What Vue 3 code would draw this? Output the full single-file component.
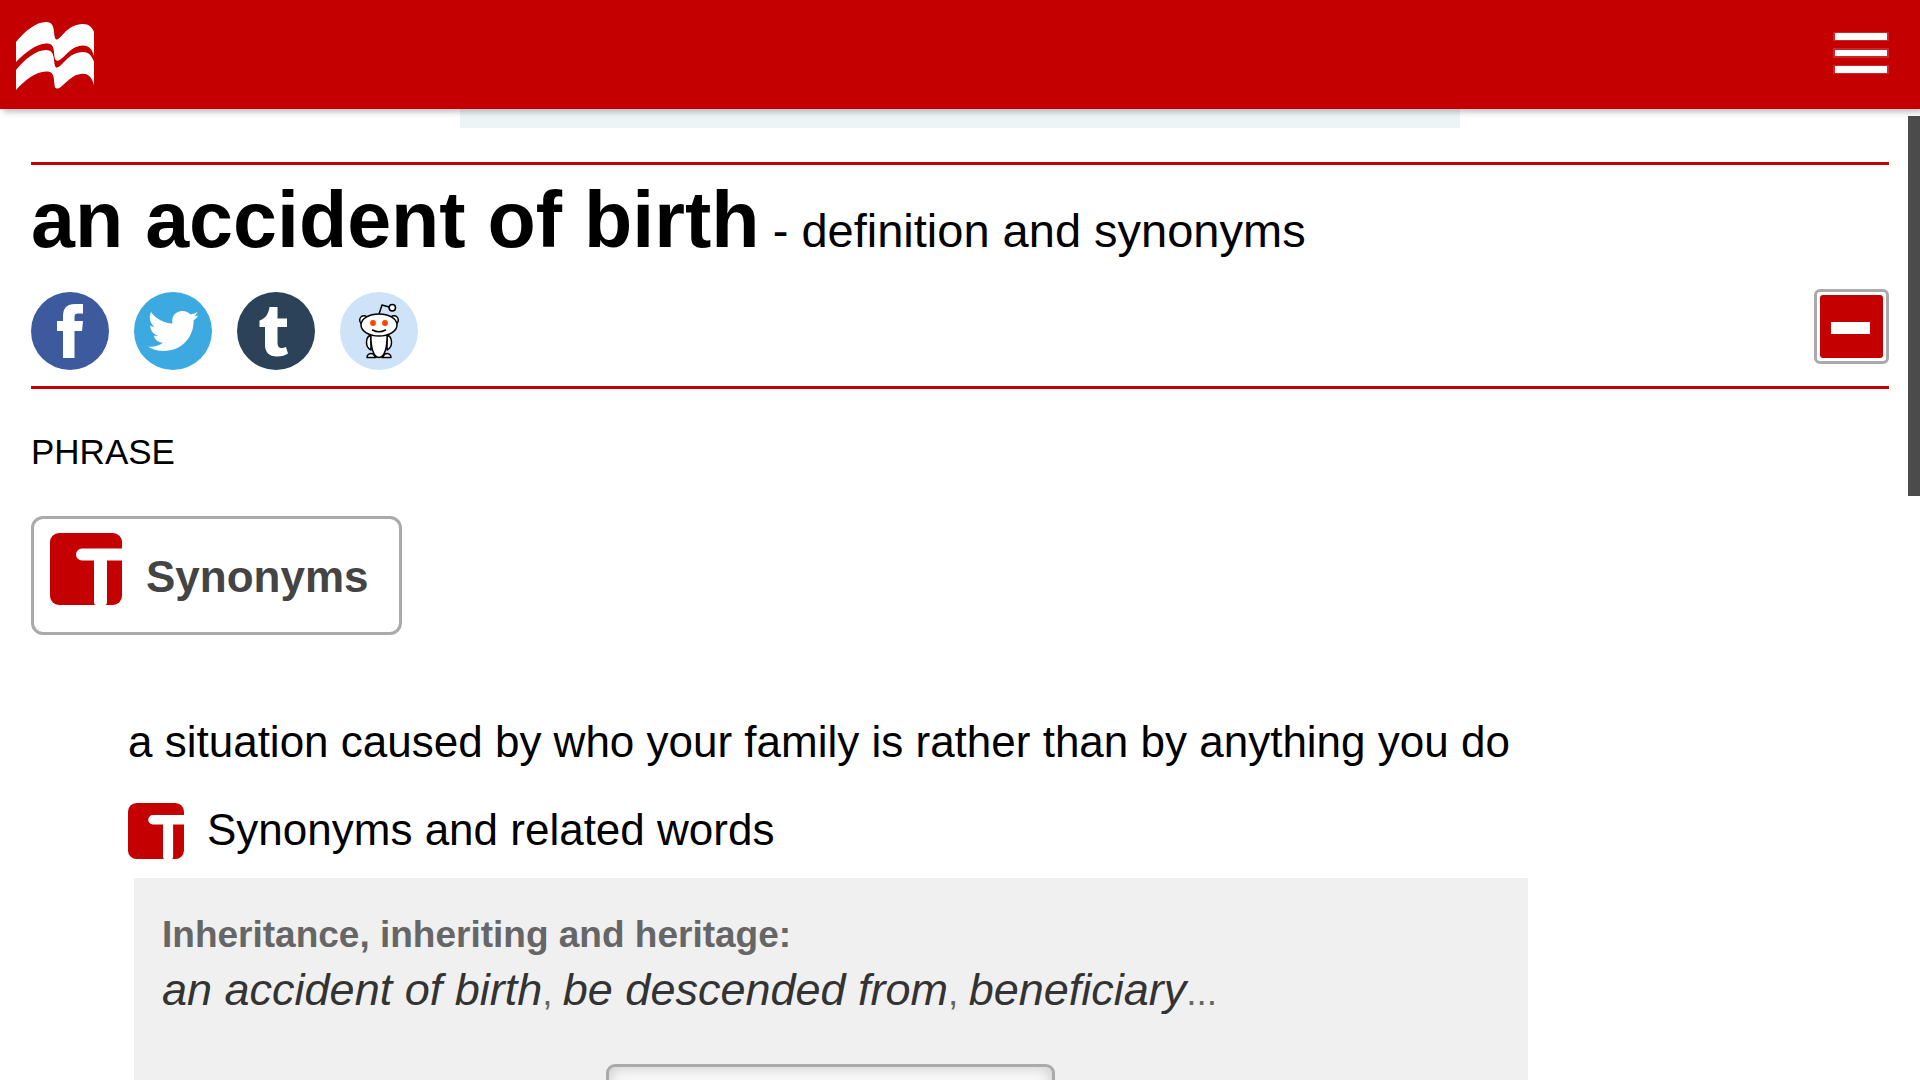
<script setup>
import { ref } from 'vue'

const open = ref(true)
const related = ['an accident of birth', 'be descended from', 'beneficiary']
</script>

<template>
  <div class="page">
    <header class="topbar">
      <a href="#" class="logo" aria-label="Macmillan Dictionary home">
        <svg viewBox="0 0 78 68" width="78" height="68" fill="#fff">
          <path d="M0 20C9 9 20 0 30 0C36 0 37.500 4 38 10C38.500 15 39 17.500 41 17.500C45 17.500 51 2 67 2C73 2 76 5 78 10V34C76 27 73 23.500 67 23.500C54 23.500 47 38.700 41.500 38.700C38.500 38.700 38.500 35 38 30C37.500 24 36 21.500 30 21.500C20 21.500 9 31 0 40Z" />
          <path d="M0 48C9 37 20 28 30 28C36 28 37.500 32 38 38C38.500 43 39 45.500 41 45.500C46 45.500 52 30 67 30C73 30 76 34 78 40V63C76 56 73 51.700 67 51.700C54 51.700 47 66.500 41 66.500C38.500 66.500 38.500 63 38 58C37.500 52 36 49.500 30 49.500C20 49.500 9 58 0 68Z" />
        </svg>
      </a>
      <button type="button" class="menu" aria-label="Menu">
        <svg viewBox="0 0 56 42" width="56" height="42" fill="#fff">
          <g opacity=".15">
            <path d="M0 0H56V9H0zM0 16H56V26H0zM0 33H56V42H0z" />
          </g>
          <path d="M2 1H54V8H2zM2 18H54V24H2zM2 34H54V41H2z" />
        </svg>
      </button>
    </header>

    <main class="content">
      <div class="banner"></div>

      <section class="entry-head">
        <h1 class="title">an accident of birth<span class="subtitle"> - definition and synonyms</span></h1>
        <div class="tools">
          <nav class="share" aria-label="Share">
            <a href="#" aria-label="Facebook">
              <svg viewBox="0 0 78 78" width="78" height="78">
                <circle cx="39" cy="39" r="39" fill="#3e5a9f" />
                <path fill="#fff" d="M32 66V39H26V29H32V24C32 16 36 12 44 12H52V21.500H47C44.500 21.500 43.500 22.500 43.500 25V29H52L51 39H43.500V66Z" />
              </svg>
            </a>
            <a href="#" aria-label="Twitter">
              <svg viewBox="0 0 78 78" width="78" height="78">
                <circle cx="39" cy="39" r="39" fill="#3ca9e1" />
                <path fill="#fff" d="M17 20C22 27 30 31 38.500 31.500C37 24 42 19 48.500 19C52 19 54.500 20.500 56.500 22.500C59 22 61.500 21 63.500 19.700C63 21.500 61.500 23.500 59.800 24.500C61.500 24.300 63 23.800 64.500 23.200C63.300 25 61.500 27 59.600 28.300C60 46 47 59 29.500 59C24 59 18.500 57.500 14 54.700C19.500 55.300 25 53.800 29 50.700C24.500 50.500 21 47.700 19.800 43.700C21.300 44 22.800 43.900 24.200 43.500C19.500 42.500 16.200 38.400 16.200 33.500C17.500 34.300 19 34.800 20.600 34.800C16 31.500 14.500 25.500 17 20Z" />
              </svg>
            </a>
            <a href="#" aria-label="Tumblr">
              <svg viewBox="0 0 78 78" width="78" height="78">
                <circle cx="39" cy="39" r="39" fill="#2c4259" />
                <path fill="#fff" d="M32.500 15H40.500V26.500H50V35H40.500V50C40.500 54.500 42 56 44.500 56C46 56 47.500 55.700 49 55L51 61.500C48 63.500 45 64.500 40 64.500C32 64.500 28 60 28 53V35H22.500V28.500C28.500 26.500 31.500 22 32.500 15Z" />
              </svg>
            </a>
            <a href="#" aria-label="Reddit">
              <svg viewBox="0 0 78 78" width="78" height="78">
                <circle cx="39" cy="39" r="39" fill="#cee3f8" />
                <g fill="#fff" stroke="#000" stroke-width="1.500" stroke-linejoin="round">
                  <path d="M39 22L42 13L49 15" fill="none" />
                  <circle cx="52.300" cy="15.700" r="3.200" />
                  <circle cx="24" cy="28" r="4.300" />
                  <circle cx="54" cy="28" r="4.300" />
                  <path d="M31 43C25 45 25 55 31 58ZM47 43C53 45 53 55 47 58Z" />
                  <path d="M27 65.500C27 62 30 61 33 62L36 65.500ZM51 65.500C51 62 48 61 45 62L42 65.500Z" />
                  <path d="M31 42C30.500 54 33 65.500 39 65.500C45 65.500 47.500 54 47 42Z" />
                  <ellipse cx="39" cy="33" rx="18" ry="11" />
                  <path d="M32.500 38Q39 41.500 45.500 38" fill="none" stroke-linecap="round" />
                </g>
                <circle cx="33" cy="31" r="2.900" fill="#ff4500" />
                <circle cx="45" cy="31" r="2.900" fill="#ff4500" />
              </svg>
            </a>
          </nav>
          <button type="button" class="toggle" aria-label="Collapse entry" @click="open = !open">
            <svg viewBox="0 0 63 63" width="63" height="63">
              <rect width="63" height="63" rx="3" fill="#c50000" />
              <path fill="#fff" d="M11 27H50V39H11z" />
            </svg>
          </button>
        </div>
      </section>

      <p class="word-class">PHRASE</p>

      <button type="button" class="synonyms">
        <svg class="t-icon" viewBox="0 0 72 72" width="72" height="72">
          <rect width="72" height="72" rx="9" fill="#c50000" />
          <path fill="#fff" d="M72 15.500H32A6 6 0 0 0 32 27.500H44V69Q44 72 46 72H55Q57 72 57 69V27.500H72Z" />
        </svg>
        <span>Synonyms</span>
      </button>

      <section v-show="open" class="sense">
        <p class="definition">a situation caused by who your family is rather than by anything you do</p>
        <a href="#" class="related-link">
          <svg class="t-icon" viewBox="0 0 72 72" width="56" height="56">
            <rect width="72" height="72" rx="11" fill="#c50000" />
            <path fill="#fff" d="M72 15.500H32A6 6 0 0 0 32 27.500H45V69Q45 72 47 72H56Q58 72 58 69V27.500H72Z" />
          </svg>
          <span>Synonyms and related words</span>
        </a>
      </section>

      <aside v-show="open" class="thesaurus">
        <h2 class="topic">Inheritance, inheriting and heritage:</h2>
        <p class="words">
          <template v-for="(word, i) in related" :key="word"><a href="#">{{ word }}</a>{{ i < related.length - 1 ? ', ' : '...' }}</template>
        </p>
        <button type="button" class="explore" aria-label="Explore Thesaurus"></button>
      </aside>
    </main>

    <div class="scroll-thumb"></div>
  </div>
</template>

<style>
body {
  margin: 0;
  background: #fff;
}
</style>

<style scoped>
.page {
  position: relative;
  height: 100vh;
  overflow: hidden;
  font-family: "Liberation Sans", Arial, sans-serif;
  font-size: 44px;
  color: #000;
}

a {
  color: inherit;
  text-decoration: none;
}

h1,
h2,
p {
  margin: 0;
}

button {
  box-sizing: border-box;
  padding: 0;
  border: 0;
  background: none;
  font-family: inherit;
}

svg {
  display: block;
  flex: none;
}

.topbar {
  position: relative;
  z-index: 1;
  box-sizing: border-box;
  display: flex;
  justify-content: space-between;
  align-items: flex-start;
  height: 109px;
  padding: 22px 31px 0 16px;
  background: #c50000;
  box-shadow: 3px 3px 6px rgba(0, 0, 0, 0.25);
}

.menu {
  margin-top: 10px;
}

.content {
  padding: 0 31px;
}

.banner {
  max-width: 1000px;
  height: 19px;
  margin: 0 auto 34px;
  background: #ecf4f6;
}

.entry-head {
  padding: 9px 0 16px;
  border-top: 3px solid #c50000;
  border-bottom: 3px solid #c50000;
}

.title {
  font-size: 79px;
  line-height: 92px;
}

.subtitle {
  font-size: 47px;
  font-weight: 400;
  line-height: 1;
}

.tools {
  display: flex;
  justify-content: space-between;
  align-items: flex-start;
  margin-top: 23px;
}

.share {
  display: flex;
  gap: 25px;
  padding-top: 3px;
}

.toggle {
  padding: 3px;
  border: 3px solid #aaa;
  border-radius: 6px;
}

.word-class {
  margin: 43px 0 44px;
  font-size: 35px;
  line-height: 40px;
}

.synonyms {
  display: flex;
  align-items: flex-start;
  gap: 24px;
  height: 119px;
  padding: 14px 30px 0 16px;
  border: 3px solid #aaa;
  border-radius: 12px;
  font-size: 44px;
  font-weight: 700;
  line-height: 88px;
  color: #444;
}

.sense {
  padding: 81px 0 0 97px;
}

.definition {
  line-height: 52px;
}

.related-link {
  display: flex;
  gap: 23px;
  margin: 35px 0 19px;
  line-height: 54px;
}

.thesaurus {
  box-sizing: border-box;
  width: 75%;
  margin-left: 103px;
  padding: 29px 28px 60px;
  background: #f0f0f0;
  font-size: 37px;
  line-height: 56px;
  color: #666;
}

.topic {
  font-size: 37px;
  line-height: 55px;
}

.words a {
  font-size: 45px;
  font-style: italic;
  color: #333;
}

.explore {
  display: block;
  width: 449px;
  height: 119px;
  margin: 43px auto 0;
  border: 3px solid #aaa;
  border-radius: 9px;
  background: #f9f9f9;
  box-shadow: inset 0 0 15px rgba(0, 0, 0, 0.2);
}

.scroll-thumb {
  position: absolute;
  top: 116px;
  right: 0;
  width: 12px;
  height: 380px;
  background: #4b4b4b;
}
</style>
